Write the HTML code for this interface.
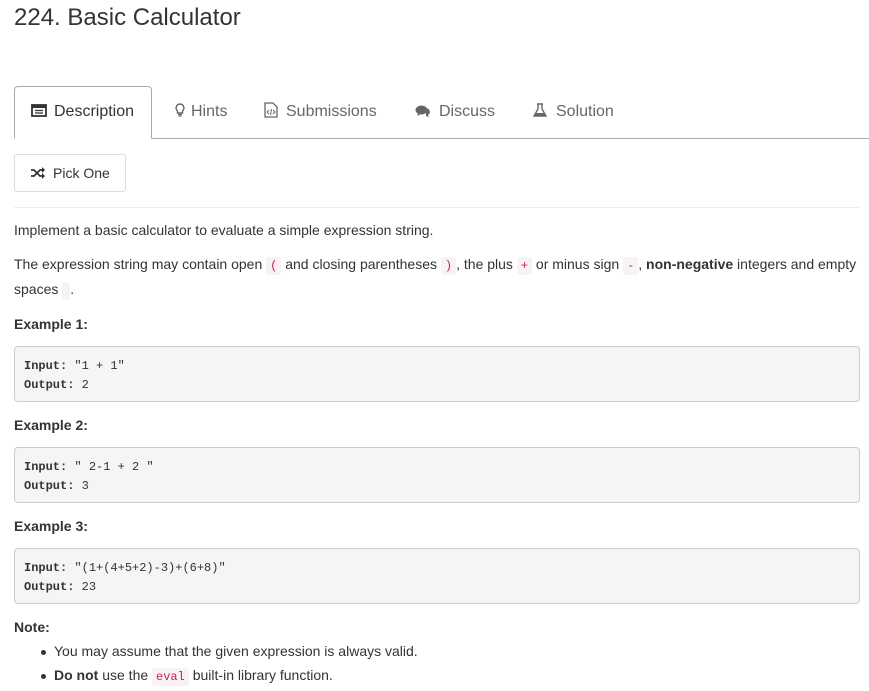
<!DOCTYPE html>
<html><head><style>
body{margin:0;background:#fff;font-family:"Liberation Sans",Arial,sans-serif;color:#333;font-size:14px;width:869px;height:691px;overflow:hidden;position:relative}
h1{position:absolute;left:14px;top:4px;margin:0;font-weight:400;font-size:24px;color:#333}
.tabs{position:absolute;left:14px;top:86px;width:855px;height:52px;border-bottom:1px solid #aaa}
.tab{position:absolute;top:0;height:52px;line-height:52px;font-size:16px;color:#666;white-space:nowrap}
.tab.act{border:1px solid #aaa;border-bottom:1px solid #fff;border-radius:4px 4px 0 0;background:#fff;color:#333;top:0;box-sizing:border-box;padding:0 0 0 16px;line-height:50px;height:53px}
.btn{position:absolute;left:14px;top:154px;width:110px;height:36px;border:1px solid #ddd;border-radius:3px;line-height:36px;font-size:14px;color:#333}
hr{position:absolute;left:14px;top:207px;width:846px;margin:0;border:0;border-top:1px solid #eee}
p{position:absolute;left:14px;margin:0;font-size:14px;white-space:nowrap}
code{font-family:"Liberation Mono",monospace;font-size:12px;color:#c7254e;background:#f9f2f4;padding:2px 4px;border-radius:3px}
.pre{position:absolute;left:14px;width:846px;height:56px;background:#f5f5f5;border:1px solid #ccc;border-radius:4px;font-family:"Liberation Mono",monospace;font-size:12px;color:#333;box-sizing:border-box;padding:10px 9px;line-height:19px}
li{position:absolute;left:54px;white-space:nowrap;list-style:none}
li:before{content:"";position:absolute;left:-13px;top:7px;width:5px;height:5px;border-radius:50%;background:#333}
</style></head><body>
<h1>224. Basic Calculator</h1>
<div class="tabs">
 <div class="tab act" style="left:0;width:138px">
  <svg width="16" height="13" viewBox="0 0 16 13" style="vertical-align:-1px;margin-right:7px"><rect x="1" y="1" width="14" height="11" fill="none" stroke="#333" stroke-width="1.8"/><rect x="1" y="1" width="14" height="3" fill="#333"/><path d="M4 6.5h8M4 9h8" stroke="#333" stroke-width="1.2"/></svg>Description</div>
 <div class="tab" style="left:160px"><svg width="12" height="14" viewBox="0 0 12 14" style="vertical-align:-1px;margin-right:5px"><path d="M6 1a4 4 0 0 0-2.5 7v2h5V8A4 4 0 0 0 6 1z" fill="none" stroke="#666" stroke-width="1.4"/><path d="M4 11.5h4M4.5 13h3" stroke="#666" stroke-width="1.2"/></svg>Hints</div>
 <div class="tab" style="left:250px"><svg width="14" height="16" viewBox="0 0 14 16" style="vertical-align:-2px;margin-right:8px"><path d="M1 1h8l4 4v10H1z" fill="none" stroke="#666" stroke-width="1.3"/><path d="M5 8l-2 2 2 2M9 8l2 2-2 2M7.5 7l-1 6" fill="none" stroke="#666" stroke-width="1"/></svg>Submissions</div>
 <div class="tab" style="left:401px"><svg width="16" height="14" viewBox="0 0 16 14" style="vertical-align:-2px;margin-right:8px"><ellipse cx="6.5" cy="6" rx="6" ry="4.5" fill="#666"/><path d="M3 9l-1 3 4-2z" fill="#666"/><path d="M11 4a5 4 0 0 1 2 7l1 2-3-1" fill="#666"/></svg>Discuss</div>
 <div class="tab" style="left:519px"><svg width="14" height="14" viewBox="0 0 14 14" style="vertical-align:-1px;margin-right:9px"><path d="M4 1h6M5 1v5l-4 7h12l-4-7V1" fill="none" stroke="#666" stroke-width="1.4"/><path d="M3 10h8l1.5 3h-11z" fill="#666"/></svg>Solution</div>
</div>
<div class="btn"><svg width="14" height="12" viewBox="0 0 14 12" style="position:absolute;left:16px;top:12px"><path d="M0 3h3l6 6h3M0 9h3l6-6h3" fill="none" stroke="#333" stroke-width="1.8"/><path d="M11 0l3 3-3 3zM11 6l3 3-3 3z" fill="#333"/></svg><span style="position:absolute;left:38px">Pick One</span></div>
<hr>
<p style="top:222px">Implement a basic calculator to evaluate a simple expression string.</p>
<p style="top:256px">The expression string may contain open <code>(</code> and closing parentheses <code>)</code>, the plus <code>+</code> or minus sign <code>-</code>, <b>non-negative</b> integers and empty</p>
<p style="top:281px">spaces <code> </code>.</p>
<p style="top:316px"><b>Example 1:</b></p>
<div class="pre" style="top:346px"><b>Input:</b> "1 + 1"<br><b>Output:</b> 2</div>
<p style="top:417px"><b>Example 2:</b></p>
<div class="pre" style="top:447px"><b>Input:</b> " 2-1 + 2 "<br><b>Output:</b> 3</div>
<p style="top:518px"><b>Example 3:</b></p>
<div class="pre" style="top:548px"><b>Input:</b> "(1+(4+5+2)-3)+(6+8)"<br><b>Output:</b> 23</div>
<p style="top:619px"><b>Note:</b></p>
<li style="top:643px">You may assume that the given expression is always valid.</li>
<li style="top:667px"><b>Do not</b> use the <code>eval</code> built-in library function.</li>
</body></html>
